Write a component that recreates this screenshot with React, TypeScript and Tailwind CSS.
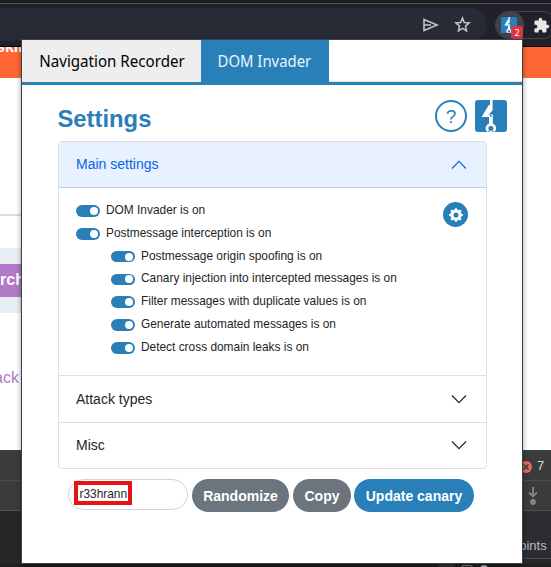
import React from "react";

function BurpLogo({ className }: { className: string }) {
  return (
    <svg viewBox="0 0 32 32" className={className}>
      <rect width="32" height="32" rx="3" fill="#2980b9" />
      <path fill="#fff" d="M15 0H17.6V10.4L13.6 14.4H17.8V25H14V17H6.6L13.8 5H15Z" />
      <path d="M13.4 31.2A3.9 3.9 0 0 1 12.4 26.6Q13.4 24.4 15.9 24.6 18.4 24.4 19.4 26.6A3.9 3.9 0 0 1 18.4 31.2" fill="none" stroke="#fff" strokeWidth="2.6" />
      <rect x="14.4" y="30.8" width="3" height="1.2" fill="#fff" />
      <rect x="15" y="15.2" width="1.6" height="1.6" fill="#2980b9" />
    </svg>
  );
}

function Chevron({ up = false, color }: { up?: boolean; color: string }) {
  return (
    <svg width="16" height="16" viewBox="0 0 16 16" fill="none" stroke={color}>
      <path d={up ? "M1 11.5 8 4.3l7 7.2" : "M1 4.5l7 7.2 7-7.2"} strokeWidth="1.2" />
    </svg>
  );
}

function Toggle({ label }: { label: string }) {
  return (
    <div className="flex h-[22.8px] items-center text-[11.9px] leading-none text-[#212529]">
      <span className="mr-1.5 mt-[1.5px] flex h-[11.5px] w-6 items-center justify-end rounded-full bg-[#2980b9] pr-[2px]">
        <span className="h-2 w-2 rounded-full bg-white" />
      </span>
      <span className="whitespace-nowrap pt-[1.5px]">{label}</span>
    </div>
  );
}

function BrowserBackdrop() {
  return (
    <div className="flex h-[567px] w-[551px] flex-col overflow-hidden bg-white">
      <div className="h-[3px] shrink-0 bg-[#1b1c20]" />
      <div className="flex h-[43px] shrink-0 border-t border-[#55565a] bg-[#20212b] pt-1">
        <div className="flex h-[33px] w-[487px] shrink-0 items-center justify-end gap-[15px] rounded-r-full bg-[#282a36] pr-4">
          <svg width="17" height="16" viewBox="0 0 17 16" fill="none" stroke="#c3c4c6" strokeWidth="1.6">
            <path d="M2 2.4 15 8 2 13.6V2.4ZM2 8h7" />
          </svg>
          <svg width="17" height="17" viewBox="0 0 17 17" fill="none" stroke="#c3c4c6" strokeWidth="1.5">
            <path d="m8.5 2 1.8 4.5 4.9.4-3.7 3.2 1.1 4.8-4.1-2.5-4.1 2.5 1.1-4.8L1.8 6.9l4.9-.4Z" />
          </svg>
        </div>
        <div className="ml-2 mt-[3px] flex h-7 w-[62px] shrink-0 items-center rounded-full border border-[#42434b]">
          <div className="relative flex h-7 w-7 shrink-0 items-center justify-center rounded-full bg-[#41434c]">
            <BurpLogo className="-ml-0.5 h-4 w-4" />
            <span className="absolute left-[15px] top-[15px] flex h-[13px] w-3 items-center justify-center rounded-[2px] bg-[#dc3545] font-['Noto_Sans',sans-serif] text-[9px] leading-none text-white">
              2
            </span>
          </div>
          <svg className="ml-[9px] shrink-0" width="17" height="17" viewBox="0 0 24 24" fill="#e8e8e6">
            <path d="M20.5 11H19V7c0-1.1-.9-2-2-2h-4V3.5a2.5 2.5 0 0 0-5 0V5H4c-1.1 0-2 .9-2 2v3.8h1.5a2.7 2.7 0 0 1 0 5.4H2V20c0 1.1.9 2 2 2h3.8v-1.5a2.7 2.7 0 0 1 5.4 0V22H17c1.1 0 2-.9 2-2v-4h1.5a2.5 2.5 0 0 0 0-5z" />
          </svg>
        </div>
      </div>
      <div className="h-px shrink-0 bg-black" />
      <div className="h-[31px] shrink-0 overflow-hidden bg-[#ff6633]">
        <div className="-ml-1 -mt-[9px] text-base font-bold leading-[18px] text-white">skills</div>
      </div>
      <div className="mt-[136px] h-[2px] w-[22px] shrink-0 bg-[#dddddd]" />
      <div className="mt-8 h-[65px] w-[22px] shrink-0 bg-[#e8edf1] pt-4">
        <div className="flex h-[33px] items-center bg-[#b278c8] pb-px text-base font-bold text-white">rch</div>
      </div>
      <div className="-ml-1.5 mt-14 h-[18px] shrink-0 text-base leading-[18px] text-[#b278c8]">ack</div>
      <div className="mt-[63px] flex h-[30px] shrink-0 items-center gap-1.5 bg-[#3b3b3b] pl-[520px]">
        <svg width="12" height="12" viewBox="0 0 12 12" className="mt-[3px] shrink-0">
          <circle cx="6" cy="6" r="6" fill="#e46962" />
          <path d="m3.5 3.5 5 5m0-5-5 5" stroke="#3b3b3b" strokeWidth="1.6" />
        </svg>
        <span className="-ml-[1px] mt-[2px] text-[13px] text-[#d5d6d8]">7</span>
      </div>
      <div className="flex h-[30px] shrink-0 items-center border-t border-[#4b4b4b] bg-[#3b3b3b] pl-[526px]">
        <svg width="14" height="20" viewBox="0 0 14 20" fill="none" stroke="#858585" strokeWidth="1.8">
          <path d="M7 1v9M3 6.5 7 10.3l4-3.8" />
          <circle cx="7" cy="16" r="2.9" fill="#858585" stroke="none" />
        </svg>
      </div>
      <div className="flex h-[54px] shrink-0 border-t border-[#505153] bg-[#272727]">
        <div className="w-[510px] shrink-0" />
        <div className="flex h-[48px] w-[41px] flex-col justify-end border-b border-[#4a4c50] bg-[#2c2d30] pb-[3px] text-[13px] text-[#b4bdc8]">
          <span className="ml-[2px]">points</span>
        </div>
      </div>
      <div className="flex h-[3px] shrink-0 overflow-hidden bg-[#202121] pl-[439px]">
        <div className="h-[3px] w-[15px] bg-[#333334]" />
        <div className="ml-[7px] mt-[1px] h-3 w-3 shrink-0 rounded-[3px] border border-[#8a8b8d]" />
        <div className="ml-[7px] mt-[1px] h-2 w-2 shrink-0 rounded-full bg-[#b9bfdc]" />
      </div>
    </div>
  );
}

export default function App() {
  return (
    <div className="relative h-[567px] w-[551px] overflow-hidden font-['Liberation_Sans',Arial,sans-serif]">
      <BrowserBackdrop />
      <div className="absolute left-[21px] top-[39px] flex h-[525px] w-[502px] flex-col border border-[#424344] bg-white shadow-[0_2px_5px_rgba(0,0,0,0.4)]">
        <div className="flex h-[45px] shrink-0 border-b-[3px] border-[#2980b9] font-['Noto_Sans',sans-serif] text-base">
          <div className="flex w-[179px] items-center justify-center bg-[#eeeeee] text-black">
            <span className="scale-x-[0.945] whitespace-nowrap">Navigation Recorder</span>
          </div>
          <div className="flex w-32 items-center justify-center bg-[#2980b9] pr-px text-[#eaf4fb]">
            <span className="scale-x-[0.93] whitespace-nowrap">DOM Invader</span>
          </div>
          <div className="flex-1 border-b border-[#dee2e6]" />
        </div>
        <div className="flex h-14 shrink-0 justify-between pl-[35.5px] pr-[15px] pt-[15px]">
          <h1 className="mt-[5px] text-[23.8px] font-bold leading-7 text-[#2980b9]">Settings</h1>
          <div className="flex gap-2">
            <div className="flex h-8 w-8 items-center justify-center rounded-full border-2 border-[#2980b9] text-[19px] leading-none text-[#2980b9]">?</div>
            <BurpLogo className="h-8 w-8" />
          </div>
        </div>
        <div className="ml-9 flex h-[328px] w-[429px] shrink-0 flex-col overflow-hidden rounded-[4px] border border-[#dfdfdf] text-sm text-[#212529]">
          <div className="flex h-[46px] shrink-0 items-center justify-between border-b border-[#c3d1e3] bg-[#e7f1ff] pl-[17px] pr-[19px] text-[#0c63e4]">
            <span className="pb-0.5">Main settings</span>
            <Chevron up color="#0c63e4" />
          </div>
          <div className="flex flex-1 justify-between pl-[17px] pr-[18px]">
            <div className="pt-[10.85px]">
              <Toggle label="DOM Invader is on" />
              <Toggle label="Postmessage interception is on" />
              <div className="pl-[35px]">
                <Toggle label="Postmessage origin spoofing is on" />
                <Toggle label="Canary injection into intercepted messages is on" />
                <Toggle label="Filter messages with duplicate values is on" />
                <Toggle label="Generate automated messages is on" />
                <Toggle label="Detect cross domain leaks is on" />
              </div>
            </div>
            <div className="mt-3.5 flex h-[25px] w-[25px] items-center justify-center rounded-full bg-[#2980b9]">
              <svg width="14" height="14" viewBox="0 0 16 16" fill="#fff">
                <path d="M9.405 1.05c-.413-1.4-2.397-1.4-2.81 0l-.1.34a1.464 1.464 0 0 1-2.105.872l-.31-.17c-1.283-.698-2.686.705-1.987 1.987l.169.311c.446.82.023 1.841-.872 2.105l-.34.1c-1.4.413-1.4 2.397 0 2.81l.34.1a1.464 1.464 0 0 1 .872 2.105l-.17.31c-.698 1.283.705 2.686 1.987 1.987l.311-.169a1.464 1.464 0 0 1 2.105.872l.1.34c.413 1.4 2.397 1.4 2.81 0l.1-.34a1.464 1.464 0 0 1 2.105-.872l.31.17c1.283.698 2.686-.705 1.987-1.987l-.169-.311a1.464 1.464 0 0 1 .872-2.105l.34-.1c1.4-.413 1.4-2.397 0-2.81l-.34-.1a1.464 1.464 0 0 1-.872-2.105l.17-.31c.698-1.283-.705-2.686-1.987-1.987l-.311.169a1.464 1.464 0 0 1-2.105-.872zM8 10.93a2.929 2.929 0 1 1 0-5.86 2.929 2.929 0 0 1 0 5.858z" />
              </svg>
            </div>
          </div>
          <div className="flex h-[47px] shrink-0 items-center justify-between border-t border-[#dfdfdf] pl-[17px] pr-[19px]">
            Attack types
            <Chevron color="#212529" />
          </div>
          <div className="flex h-[46px] shrink-0 items-center justify-between border-t border-[#dfdfdf] pb-[2px] pl-[17px] pr-[19px]">
            Misc
            <Chevron color="#212529" />
          </div>
        </div>
        <div className="ml-[46px] mt-2.5 flex items-start text-sm font-bold text-white">
          <div className="flex h-[31px] w-[120px] items-center rounded-full border border-[#ced4da] pl-[5px]">
            <span className="mt-[-3px] flex h-6 w-[58px] items-center border-4 border-[#e81414] pl-[1.5px] pt-[2px] text-[11.9px] font-normal text-[#212529]">r33hrann</span>
          </div>
          <div className="ml-1 flex h-[33px] w-[97px] items-center justify-center rounded-full bg-[#6c757d]">Randomize</div>
          <div className="ml-1 flex h-[33px] w-[58px] items-center justify-center rounded-full bg-[#6c757d]">Copy</div>
          <div className="ml-[3px] flex h-[33px] w-[120px] items-center justify-center rounded-full bg-[#2980b9]">Update canary</div>
        </div>
      </div>
    </div>
  );
}
